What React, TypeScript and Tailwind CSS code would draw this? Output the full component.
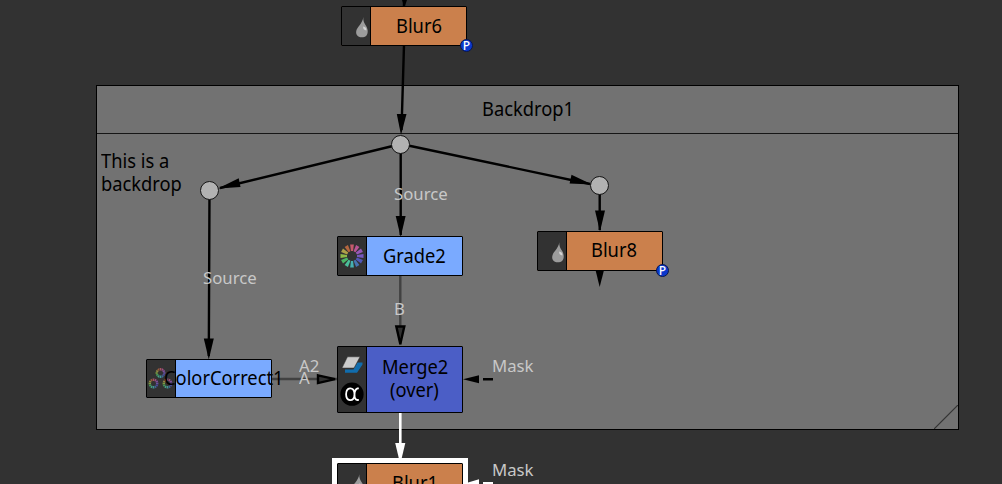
import React from "react";

type Kind = "blur" | "grade" | "correct" | "merge";

const wheelColors = ["#c65a6c", "#bb5595", "#9657b8", "#7658bd", "#5156b8", "#4773b1", "#45b0b0", "#4bbf9b", "#4bb567", "#8fb947", "#b0a048", "#b4663f"];

function Drop() {
  return (
    <svg className="absolute left-[13px] top-[9px]" width="15" height="22" viewBox="0 0 15 22">
      <path d="M8.300 1C8 4.500 6.300 6.800 4.200 9.800C1.400 13 0.300 16.300 1.900 19C3.500 21.900 9 22 11.300 19.700C13.800 16.700 12.700 12 10.500 9C8.700 6.500 8.100 4 8.300 1Z" fill="#9c9c9c" />
      <path d="M8.200 10.500C10.200 10.600 11.900 12.500 11.400 14.600C9.200 14.200 7.700 12.500 8.200 10.500Z" fill="#d5d5d5" />
    </svg>
  );
}

function Wheel({ x, y, inner, outer, dim = false }: { x: number; y: number; inner: number; outer: number; dim?: boolean }) {
  return (
    <g transform={`translate(${x} ${y})`} opacity={dim ? 0.8 : 1}>
      {wheelColors.map((c, i) => {
        const w = outer * (dim ? 0.2 : 0.165);
        return <path key={c} d={`M${-w * 0.55} ${-inner}L${-w} ${-outer}H${w}L${w * 0.55} ${-inner}Z`} fill={c} transform={`rotate(${i * 30})`} />;
      })}
    </g>
  );
}

function Icon({ kind }: { kind: Kind }) {
  if (kind === "blur") return <Drop />;
  if (kind === "grade")
    return (
      <svg className="absolute left-0 top-0" width="28" height="38" viewBox="0 0 28 38">
        <Wheel x={14} y={19} inner={5} outer={11.5} />
      </svg>
    );
  if (kind === "correct")
    return (
      <svg className="absolute left-0 top-0" width="28" height="38" viewBox="0 0 28 38">
        <Wheel x={13.500} y={13} inner={2.500} outer={4.900} dim />
        <Wheel x={6.500} y={23.500} inner={2.500} outer={4.900} dim />
        <Wheel x={20.500} y={23.500} inner={2.500} outer={4.900} dim />
      </svg>
    );
  return (
    <svg className="absolute left-0 top-0" width="28" height="65" viewBox="0 0 28 65">
      <path d="M7 25.700V22.500H15.500L19.500 15.500H24.500V17.500L19 25.700Z" fill="#116cac" />
      <path d="M9.500 9.800H22L16 21H4Z" fill="#cbcbcb" stroke="#323232" strokeWidth="0.500" />
      <circle cx="14" cy="47.200" r="11.600" fill="#000" />
      <path d="M20.800 41.300H19.500C15.500 43 15.500 53 19.500 53H20.800M16.500 47.200C16.500 51.500 14.600 53.300 12 53.100C6.800 52.600 6.800 41.800 12 41.300C14.600 41.100 16.500 43 16.500 47.200Z" fill="none" stroke="#fff" strokeWidth="1.800" />
    </svg>
  );
}

function Node({ place, color, kind, passthrough }: { place: string; color: string; kind: Kind; passthrough?: boolean }) {
  return (
    <div className={`absolute flex w-[126px] rounded-[1px] border border-black ${place} ${color}`}>
      <div className="relative w-[29px] shrink-0 border-r border-black bg-[#323232]">
        <Icon kind={kind} />
      </div>
      {passthrough && (
        <div className="absolute -bottom-[7px] -right-[7px] flex size-[13px] items-center justify-center rounded-full border border-[#08164f] bg-[#0b38cc] font-['Noto_Sans'] text-[12px] leading-none font-medium text-white">P</div>
      )}
    </div>
  );
}

function Text({ place, small = false, children }: { place: string; small?: boolean; children: React.ReactNode }) {
  return (
    <div className={`absolute origin-left whitespace-nowrap ${small ? "scale-x-[.985] text-[17px] leading-[20px] text-[#c8c8c8]" : "scale-x-[.915] text-[20px] leading-[23px] text-black"} ${place}`}>
      {children}
    </div>
  );
}

function Dot({ place }: { place: string }) {
  return <div className={`absolute size-[19px] rounded-full border border-[#151515] bg-[#b2b2b2] ${place}`} />;
}

function Wires() {
  return (
    <svg className="absolute left-0 top-0" width="1002" height="484" viewBox="0 0 1002 484">
      <g stroke="#000" strokeWidth="2.400">
        <path d="M404 0V7M404 45L401.500 130M401 144L220 188M401 144L590 184M400.700 150V235M209.500 190L208.800 356M599.700 190V230M483 379.300H493" />
      </g>
      <g fill="#000">
        <path d="M402 0H407L404.500 7Z" />
        <path d="M396.800 114H406.500L401 135Z" />
        <path d="M218 188.500L238.700 178.300L240.500 187Z" />
        <path d="M592 184.500L571.500 174.700L569.600 183.500Z" />
        <path d="M395.700 216H405.600L400.700 237Z" />
        <path d="M203.800 338.500H213.800L208.800 359.500Z" />
        <path d="M595 210.500H605L600 231.500Z" />
        <path d="M595.500 270H604L599.700 287Z" />
        <path d="M463 379.300L479 375.300V383.300Z" />
      </g>
      <g fill="none" stroke="#414141" strokeWidth="2.400">
        <path d="M400.300 276V345M272 379H337" />
      </g>
      <path d="M396.300 326.500H404.300L400.300 344Z M318 375.300L335 379.200L318 383.100Z" fill="#303030" stroke="#000" strokeWidth="2.400" />
      <path d="M400.300 412V446" stroke="#fff" strokeWidth="2.600" />
      <path d="M395.200 443H405.300L401.500 459H399Z" fill="#fff" />
      <path d="M468 482.500L479 479.300V484H468ZM483 482H493V484H483Z" fill="#fff" />
    </svg>
  );
}

export default function App() {
  return (
    <main className="relative h-[484px] w-[1002px] overflow-hidden bg-[#323232] font-['Noto_Sans',sans-serif]">
      <section className="absolute left-[96px] top-[85px] h-[345px] w-[863px] border border-black bg-[#727272]">
        <div className="h-[48px] border-b border-[#151515]" />
        <svg className="absolute bottom-0 right-0" width="24" height="24" viewBox="0 0 24 24">
          <path d="M0 24L24 0" stroke="#333" strokeWidth="1.200" />
        </svg>
      </section>
      <Wires />
      <Dot place="left-[391px] top-[134.5px]" />
      <Dot place="left-[200px] top-[181px]" />
      <Dot place="left-[590px] top-[176px]" />
      <Node place="left-[341px] top-[6px] h-[40px]" color="bg-[#cb804c]" kind="blur" passthrough />
      <Node place="left-[337px] top-[236px] h-[40px]" color="bg-[#7aaaff]" kind="grade" />
      <Node place="left-[146px] top-[359px] h-[39px]" color="bg-[#7aaaff]" kind="correct" />
      <Node place="left-[537px] top-[231px] h-[40px]" color="bg-[#cb804c]" kind="blur" passthrough />
      <Node place="left-[337px] top-[346px] h-[67px]" color="bg-[#4b5ec6]" kind="merge" />
      <div className="absolute left-[332px] top-[458px] h-[40px] w-[136px] bg-white" />
      <Node place="left-[337px] top-[463px] h-[40px]" color="bg-[#cb804c]" kind="blur" />
      <Text place="left-[395.5px] top-[14px]">Blur6</Text>
      <Text place="left-[481.5px] top-[97px]">Backdrop1</Text>
      <Text place="left-[101px] top-[149px]">This is a<br />backdrop</Text>
      <Text place="left-[383px] top-[244px]">Grade2</Text>
      <Text place="left-[163.5px] top-[366px]">ColorCorrect1</Text>
      <Text place="left-[590.5px] top-[238px]">Blur8</Text>
      <Text place="left-[382px] top-[355px]">Merge2</Text>
      <Text place="left-[390px] top-[378px]">(over)</Text>
      <Text place="left-[391.5px] top-[471px]">Blur1</Text>
      <Text small place="left-[394px] top-[184px]">Source</Text>
      <Text small place="left-[203px] top-[268px]">Source</Text>
      <Text small place="left-[394px] top-[299px]">B</Text>
      <Text small place="left-[299px] top-[356px]">A2</Text>
      <Text small place="left-[298.5px] top-[368px]">A</Text>
      <Text small place="left-[492px] top-[356px]">Mask</Text>
      <Text small place="left-[492px] top-[460px]">Mask</Text>
    </main>
  );
}
